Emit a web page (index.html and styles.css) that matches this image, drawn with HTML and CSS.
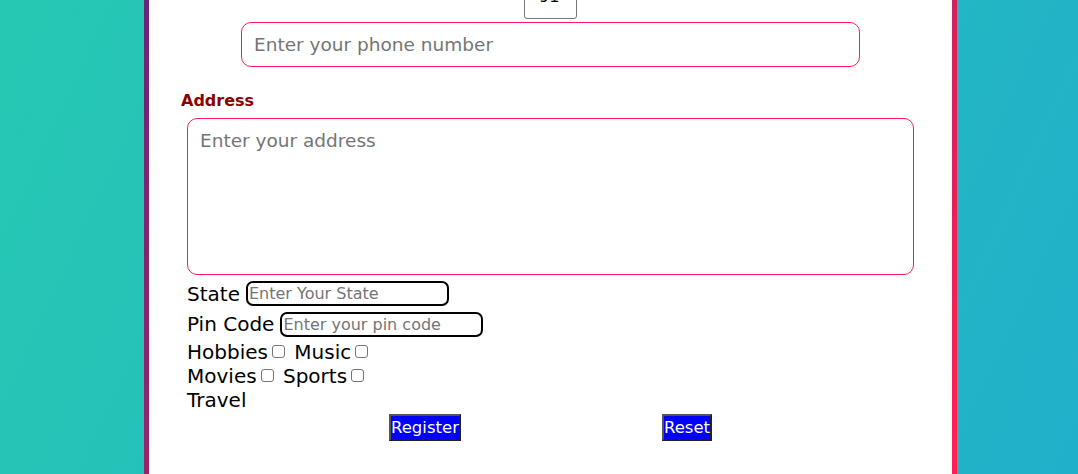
FILE: index.html
```html
<!DOCTYPE html>
<html lang="en">
<head>
<meta charset="utf-8">
<title>Registration</title>
<link rel="stylesheet" href="styles.css">
</head>
<body>
<div class="page">
  <div class="card">
    <div class="card-inner">
      <form class="form">
        <select class="code"><option>91</option></select>
        <input class="phone" type="tel" placeholder="Enter your phone number">
        <label class="section-label">Address</label>
        <textarea class="address" placeholder="Enter your address"></textarea>
        <div class="row"><span>State</span><input class="small-input" type="text" placeholder="Enter Your State"></div>
        <div class="row"><span>Pin Code</span><input class="small-input" type="text" placeholder="Enter your pin code"></div>
        <div class="hobbies">
          <div class="line">Hobbies<input class="check" type="checkbox"> Music<input class="check" type="checkbox"></div>
          <div class="line">Movies<input class="check" type="checkbox"> Sports<input class="check" type="checkbox"></div>
          <div class="line">Travel</div>
        </div>
        <div class="buttons">
          <button type="submit" class="btn">Register</button>
          <button type="reset" class="btn">Reset</button>
        </div>
      </form>
    </div>
  </div>
</div>
</body>
</html>
```
FILE: styles.css
```css
html, body {
  margin: 0;
  height: 100%;
  overflow: hidden;
}
body {
  background: linear-gradient(115deg, #27c8b3, #21b0ca) fixed;
  font-family: "DejaVu Sans", sans-serif;
  color: #000;
}
.page {
  padding-left: 144px;
}
.card {
  width: 813px;
  box-sizing: border-box;
  padding: 5px 5px 5px;
  margin-top: -31px;
  background: linear-gradient(128deg, #6a2578 10%, #ff1f50 89%) fixed;
}
.card-inner {
  background: #fff;
  padding: 0 32px 120px;
}
.form {
  margin: 0;
}
.code {
  display: block;
  margin: 0 auto;
  width: 53px;
  height: 45px;
  border: 1px solid #767676;
  border-radius: 3px;
  background: #fff;
  padding-left: 10px;
  font-family: "DejaVu Sans", sans-serif;
  font-size: 16px;
  color: #000;
}
.phone {
  display: block;
  width: 619px;
  height: 45px;
  box-sizing: border-box;
  margin: 3px auto 0;
  border: 1px solid #ff1e50;
  border-radius: 10px;
  padding: 0 12px;
  font-family: "DejaVu Sans", sans-serif;
  font-size: 18.5px;
  outline: none;
}
.phone::placeholder,
.address::placeholder,
.small-input::placeholder {
  color: #757575;
}
.section-label {
  display: block;
  margin-top: 23.5px;
  font-weight: bold;
  color: #8b0000;
  font-size: 16px;
  line-height: 20px;
}
.address {
  display: block;
  margin: 7.5px 6px 0;
  width: calc(100% - 12px);
  height: 157px;
  box-sizing: border-box;
  border: 1px solid #ff1e50;
  border-radius: 10px;
  padding: 11px 12px;
  font-family: "DejaVu Sans", sans-serif;
  font-size: 18.5px;
  resize: none;
  outline: none;
}
.row {
  display: flex;
  align-items: center;
  gap: 6px;
  margin: 6px 6px 0;
  height: 25px;
  font-size: 20px;
}
.row + .row {
  margin-top: 5.5px;
}
.small-input {
  width: 203px;
  height: 25px;
  box-sizing: border-box;
  border: 2px solid #000;
  border-radius: 7px;
  padding: 0 1px;
  font-family: "DejaVu Sans", sans-serif;
  font-size: 16px;
  outline: none;
}
.hobbies {
  margin: 3px 6px 0;
  font-size: 20px;
  line-height: 24.3px;
}
.check {
  appearance: none;
  -webkit-appearance: none;
  width: 13px;
  height: 13px;
  box-sizing: border-box;
  border: 1px solid #767676;
  border-radius: 3px;
  background: #fff;
  margin: 3px 3px 1px 4px;
}
.buttons {
  display: flex;
  justify-content: center;
  gap: 201px;
  margin-top: 2px;
}
.btn {
  background: #0000ff;
  color: #fff;
  font-family: "DejaVu Sans", sans-serif;
  font-size: 16.5px;
  padding: 2px 0;
  border: 2px solid;
  border-color: #555 #222 #222 #555;
  border-radius: 0;
}
```
